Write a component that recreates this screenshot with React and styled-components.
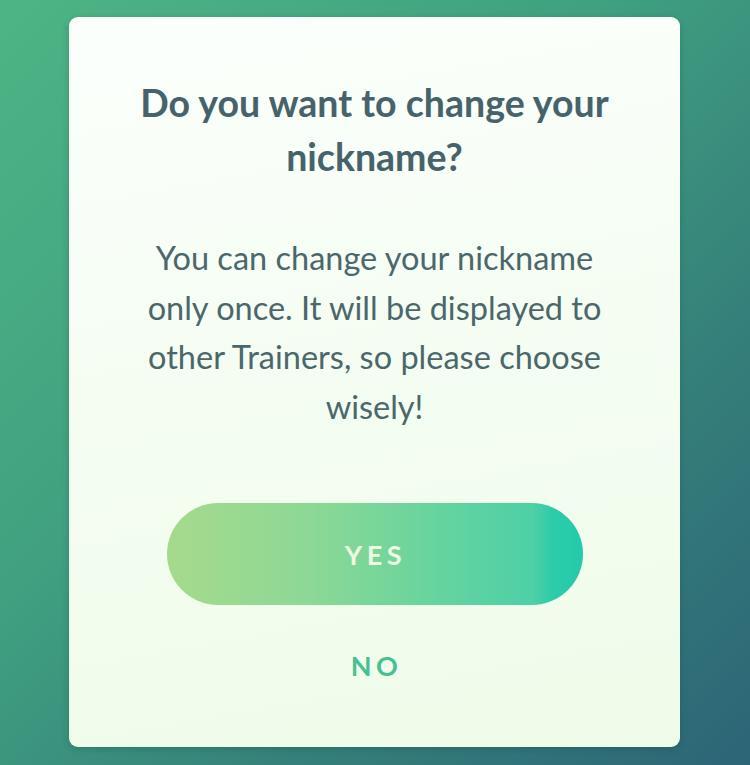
import React from 'react';
import styled, { createGlobalStyle } from 'styled-components';

const GlobalStyle = createGlobalStyle`
  html, body {
    margin: 0;
    padding: 0;
  }
  body {
    font-family: Lato, "Noto Sans", sans-serif;
  }
`;

export default function App() {
  return (
    <>
      <GlobalStyle />
      <Page>
        <Card>
          <Title>Do you want to change your nickname?</Title>
          <Message>
            You can change your nickname only once. It will be displayed to
            other Trainers, so please choose wisely!
          </Message>
          <YesButton type="button">YES</YesButton>
          <NoButton type="button">NO</NoButton>
        </Card>
      </Page>
    </>
  );
}

const Page = styled.div`
  width: 750px;
  height: 765px;
  box-sizing: border-box;
  padding: 17px 70px 18px 69px;
  background: linear-gradient(135deg, #4db585 0%, #40a080 40%, #35807a 70%, #2c6577 100%);
  overflow: hidden;
`;

const Card = styled.div`
  height: 730px;
  box-sizing: border-box;
  padding-top: 59px;
  border-radius: 9px;
  background: linear-gradient(170deg, #fbfffc 0%, #f4fdf1 55%, #effce9 100%);
  box-shadow: 0 2px 6px rgba(20, 60, 60, 0.25);
  display: flex;
  flex-direction: column;
  align-items: center;
`;

const Title = styled.h1`
  margin: 0;
  padding: 0 40px;
  font-size: 37.5px;
  line-height: 54px;
  font-weight: 700;
  color: #46626b;
  text-align: center;
`;

const Message = styled.p`
  margin: 49px 0 0;
  padding: 0 66px;
  font-size: 32.5px;
  line-height: 49.5px;
  font-weight: 400;
  color: #4a686b;
  text-align: center;
`;

const YesButton = styled.button`
  margin-top: 72px;
  width: 416px;
  height: 102px;
  border: none;
  border-radius: 51px;
  background: linear-gradient(90deg, #a6da8d 0%, #8cd895 35%, #63d3a0 68%, #4dd0a6 88%, #2ccbaa 93%, #24caab 100%);
  color: #eef9e2;
  font-family: Lato, "Noto Sans", sans-serif;
  font-size: 27px;
  font-weight: 700;
  letter-spacing: 4.5px;
  padding-left: 8px;
  cursor: pointer;
`;

const NoButton = styled.button`
  margin-top: 46px;
  border: none;
  background: transparent;
  color: #47c194;
  font-family: Lato, "Noto Sans", sans-serif;
  font-size: 27px;
  line-height: 30px;
  font-weight: 700;
  letter-spacing: 4.5px;
  padding: 0 0 0 4px;
  cursor: pointer;
`;
